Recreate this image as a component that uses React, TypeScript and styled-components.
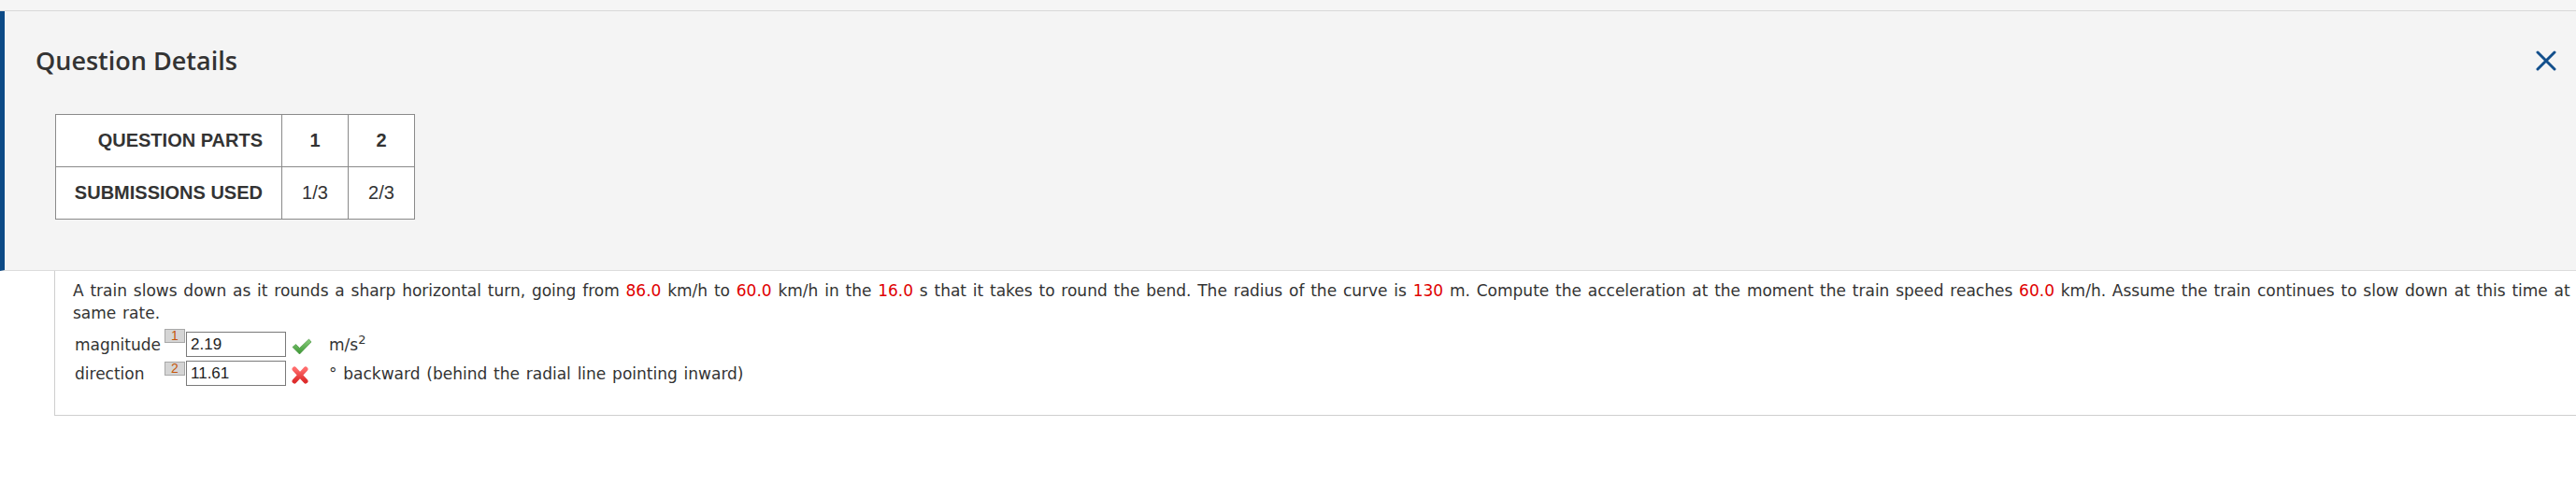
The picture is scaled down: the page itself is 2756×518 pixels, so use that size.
import React from 'react'
import styled, { createGlobalStyle } from 'styled-components'

const GlobalStyle = createGlobalStyle`
  html, body {
    margin: 0;
    padding: 0;
    background: #ffffff;
    overflow: hidden;
  }
  body {
    font-family: "DejaVu Sans", Verdana, sans-serif;
    color: #333;
  }
`

const TopStrip = styled.div`
  height: 11px;
  background: #f5f5f5;
  border-bottom: 1px solid #d9d9d9;
`

const DetailsPanel = styled.section`
  background: #f4f4f4;
  border-left: 5px solid #0c4a86;
  border-bottom: 1px solid #dcdcdc;
  height: 278px;
  box-sizing: border-box;
  padding: 34px 21px 0 33px;
  display: flex;
  flex-direction: column;
`

const PanelHeader = styled.div`
  display: flex;
  align-items: center;
  justify-content: space-between;
`

const Title = styled.h2`
  margin: 0;
  font-family: "Open Sans", "Noto Sans", sans-serif;
  font-weight: 600;
  font-size: 27px;
  color: #333;
`

const CloseButton = styled.button`
  border: 0;
  background: none;
  padding: 0;
  width: 22px;
  height: 22px;
  display: flex;
  cursor: pointer;
  svg {
    width: 22px;
    height: 22px;
  }
`

const PartsTable = styled.table`
  margin: 39px 0 0 21px;
  border-collapse: collapse;
  table-layout: fixed;
  width: 384px;
  background: #fff;
  font-family: "Liberation Sans", Arial, sans-serif;
  font-size: 20px;
  color: #333;
`

const Cell = styled.td<{ $head?: boolean; $label?: boolean }>`
  border: 1px solid #8a8a8a;
  height: 55px;
  padding: 0 20px 0 10px;
  text-align: ${p => (p.$label ? 'right' : 'center')};
  font-weight: ${p => (p.$head || p.$label ? 700 : 400)};
  white-space: nowrap;
  ${p => (!p.$label ? 'padding: 0;' : '')}
`

const QuestionBox = styled.div`
  margin-left: 58px;
  border-left: 1px solid #cfcfcf;
  border-bottom: 1px solid #cfcfcf;
  height: 155px;
  box-sizing: border-box;
  padding: 9px 0 0 19px;
`

const Prompt = styled.p`
  margin: 0;
  font-size: 17px;
  line-height: 24px;
  word-spacing: 1.4px;
  white-space: nowrap;
`

const Given = styled.span`
  color: #e00000;
`

const AnswerList = styled.div`
  margin-top: 8px;
  display: flex;
  flex-direction: column;
  gap: 4px;
`

const AnswerRow = styled.div`
  display: flex;
  align-items: center;
  height: 27px;
  font-size: 17px;
`

const FieldLabel = styled.span`
  width: 96px;
  padding-left: 2px;
  line-height: 24px;
`

const PartBadge = styled.span<{ $lift: number }>`
  align-self: flex-start;
  margin-top: ${p => p.$lift}px;
  width: 22px;
  height: 15px;
  box-sizing: border-box;
  background: #d5d5d5;
  border: 1px solid #a8a8a8;
  color: #c5560b;
  font-family: "Liberation Sans", Arial, sans-serif;
  font-size: 14px;
  line-height: 12px;
  text-align: center;
`

const AnswerInput = styled.input`
  width: 107px;
  height: 27px;
  box-sizing: border-box;
  margin: 0 0 0 1px;
  border: 1px solid #7a7a7a;
  padding: 0 4px;
  font-family: "Liberation Sans", Arial, sans-serif;
  font-size: 17px;
  color: #222;
  background: #fff;
`

const Mark = styled.span`
  width: 24px;
  margin: 4px 0 0 6px;
  display: flex;
  align-items: center;
`

const Unit = styled.span`
  margin-left: 16px;
  line-height: 24px;
  word-spacing: 1.4px;
  sup {
    font-size: 13px;
    line-height: 0;
    vertical-align: 7px;
  }
`

const CheckMark = () => (
  <svg width="22" height="18" viewBox="0 0 22 18">
    <defs>
      <linearGradient id="ok" x1="0" y1="0" x2="0" y2="1">
        <stop offset="0" stopColor="#8ccf7e" />
        <stop offset="1" stopColor="#3a9532" />
      </linearGradient>
    </defs>
    <path d="M1 9.5 L4.5 6.5 L8.5 10.5 L18.5 1 L21 4 L8.5 17 Z" fill="url(#ok)" stroke="#3c8c34" strokeWidth="0.6" strokeLinejoin="round" />
  </svg>
)

const CrossMark = () => (
  <svg width="18" height="19" viewBox="0 0 18 19">
    <defs>
      <linearGradient id="bad" x1="0" y1="0" x2="0" y2="1">
        <stop offset="0" stopColor="#ff6b6b" />
        <stop offset="1" stopColor="#dd2c2c" />
      </linearGradient>
    </defs>
    <path d="M3 3 L15 16 M15 3 L3 16" stroke="url(#bad)" strokeWidth="5" strokeLinecap="round" />
  </svg>
)

const App = () => {
  return (
    <>
      <GlobalStyle />
      <TopStrip />
      <DetailsPanel>
        <PanelHeader>
          <Title>Question Details</Title>
          <CloseButton aria-label="Close">
            <svg viewBox="0 0 22 22">
              <path d="M2 2 L20 20 M20 2 L2 20" stroke="#124f8c" strokeWidth="3" strokeLinecap="round" />
            </svg>
          </CloseButton>
        </PanelHeader>
        <PartsTable>
          <colgroup>
            <col style={{ width: 242 }} />
            <col style={{ width: 71 }} />
            <col style={{ width: 71 }} />
          </colgroup>
          <tbody>
            <tr>
              <Cell $label>QUESTION PARTS</Cell>
              <Cell $head>1</Cell>
              <Cell $head>2</Cell>
            </tr>
            <tr>
              <Cell $label>SUBMISSIONS USED</Cell>
              <Cell>1/3</Cell>
              <Cell>2/3</Cell>
            </tr>
          </tbody>
        </PartsTable>
      </DetailsPanel>
      <QuestionBox>
        <Prompt>
          A train slows down as it rounds a sharp horizontal turn, going from <Given>86.0</Given> km/h to{' '}
          <Given>60.0</Given> km/h in the <Given>16.0</Given> s that it takes to round the bend. The radius of the
          curve is <Given>130</Given> m. Compute the acceleration at the moment the train speed reaches{' '}
          <Given>60.0</Given> km/h. Assume the train continues to slow down at this time at
        </Prompt>
        <Prompt>same rate.</Prompt>
        <AnswerList>
          <AnswerRow>
            <FieldLabel>magnitude</FieldLabel>
            <PartBadge $lift={-3}>1</PartBadge>
            <AnswerInput defaultValue="2.19" />
            <Mark><CheckMark /></Mark>
            <Unit>m/s<sup>2</sup></Unit>
          </AnswerRow>
          <AnswerRow>
            <FieldLabel>direction</FieldLabel>
            <PartBadge $lift={1}>2</PartBadge>
            <AnswerInput defaultValue="11.61" />
            <Mark><CrossMark /></Mark>
            <Unit>° backward (behind the radial line pointing inward)</Unit>
          </AnswerRow>
        </AnswerList>
      </QuestionBox>
    </>
  )
}

export default App
